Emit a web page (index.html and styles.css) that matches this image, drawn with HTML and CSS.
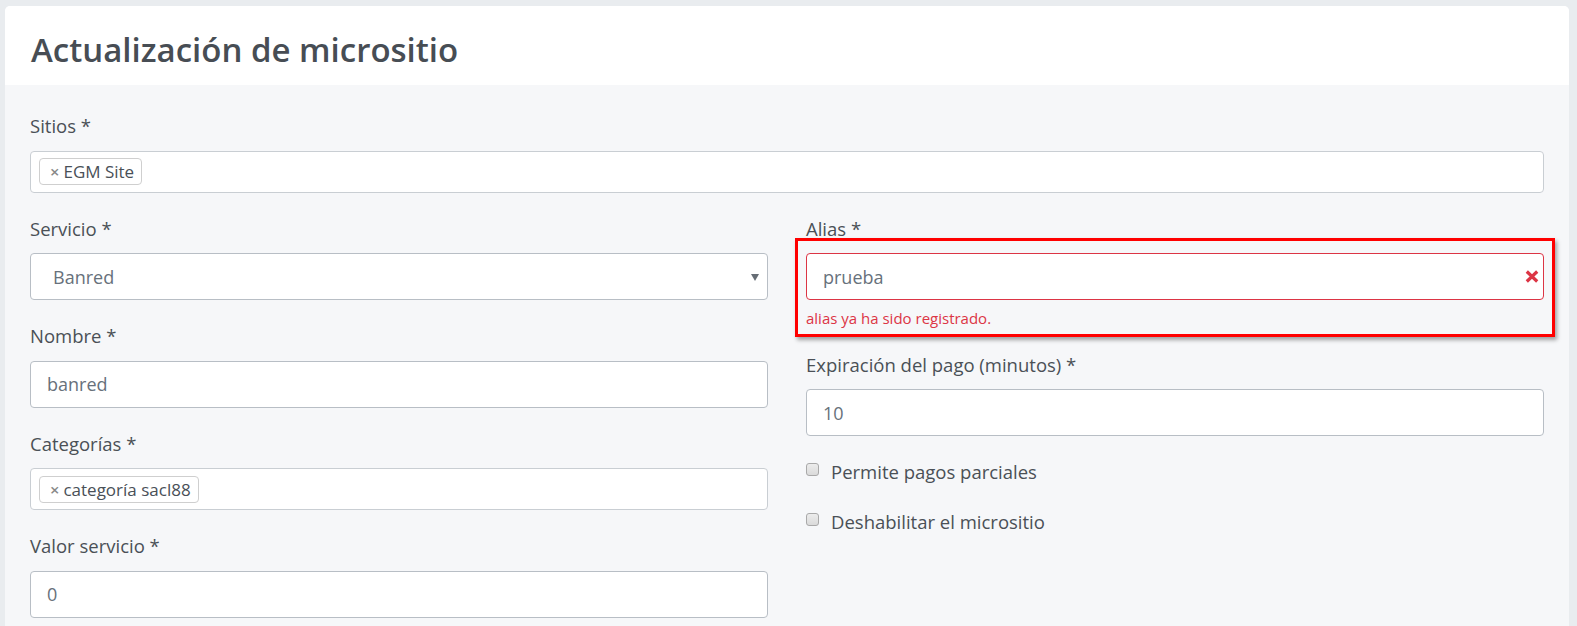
FILE: index.html
```html
<!DOCTYPE html>
<html lang="es">
<head>
<meta charset="utf-8">
<title>Actualización de micrositio</title>
<link rel="stylesheet" href="styles.css">
</head>
<body>
<div class="card">
  <div class="card-header">
    <h1 class="title">Actualización de micrositio</h1>
  </div>
  <div class="card-body">
    <div class="group">
      <label class="label">Sitios *</label>
      <div class="multi">
        <span class="tag"><span class="tag-x">×</span>EGM Site</span>
      </div>
    </div>
    <div class="cols">
      <div class="col">
        <div class="group">
          <label class="label">Servicio *</label>
          <div class="input select">Banred<span class="caret"></span></div>
        </div>
        <div class="group">
          <label class="label">Nombre *</label>
          <div class="input">banred</div>
        </div>
        <div class="group">
          <label class="label">Categorías *</label>
          <div class="multi">
            <span class="tag"><span class="tag-x">×</span>categoría sacl88</span>
          </div>
        </div>
        <div class="group">
          <label class="label">Valor servicio *</label>
          <div class="input">0</div>
        </div>
      </div>
      <div class="col">
        <div class="group alias-group">
          <label class="label">Alias *</label>
          <div class="input invalid">prueba
            <svg class="x-icon" width="14" height="13" viewBox="0 0 14 13"><path d="M1.8 1.5 L12.2 11.5 M12.2 1.5 L1.8 11.5" stroke="#dc3545" stroke-width="3.2"/></svg>
          </div>
          <div class="error">alias ya ha sido registrado.</div>
          <div class="highlight"></div>
        </div>
        <div class="group">
          <label class="label">Expiración del pago (minutos) *</label>
          <div class="input">10</div>
        </div>
        <div class="check-row"><span class="checkbox"></span>Permite pagos parciales</div>
        <div class="check-row"><span class="checkbox"></span>Deshabilitar el micrositio</div>
      </div>
    </div>
  </div>
</div>
</body>
</html>
```
FILE: styles.css
```css
html, body {
  margin: 0;
  padding: 0;
}
body {
  background: #e9ecef;
  font-family: "Open Sans", "Noto Sans", "Liberation Sans", sans-serif;
  color: #495057;
  height: 626px;
  overflow: hidden;
}
.card {
  margin: 6px 8px 0 5px;
  background: #f6f7f9;
  border-radius: 5px;
  overflow: hidden;
  height: 640px;
}
.card-header {
  box-sizing: border-box;
  background: #fff;
  height: 79px;
  padding: 24px 0 0 26px;
}
.title {
  margin: 0;
  font-size: 33px;
  line-height: 40px;
  font-weight: 600;
  color: #474d54;
}
.card-body {
  padding: 28px 25px 0 25px;
}
.group {
  margin-bottom: 23px;
}
.label {
  display: block;
  font-size: 18.5px;
  line-height: 26px;
  height: 26px;
  margin-bottom: 11.5px;
  color: #4a5056;
}
.input {
  box-sizing: border-box;
  height: 47px;
  background: #fff;
  border: 1px solid #b8bec5;
  border-radius: 4px;
  padding: 0 16px;
  display: flex;
  align-items: center;
  font-size: 18px;
  color: #67717b;
  position: relative;
}
.select {
  padding-left: 22px;
}
.caret {
  position: absolute;
  right: 8px;
  top: 20px;
  width: 0;
  height: 0;
  border-left: 4px solid transparent;
  border-right: 4px solid transparent;
  border-top: 7px solid #666d75;
}
.multi {
  box-sizing: border-box;
  height: 42px;
  background: #fff;
  border: 1px solid #c9ced3;
  border-radius: 4px;
  padding: 0 8px;
  display: flex;
  align-items: center;
}
.tag {
  display: inline-flex;
  align-items: center;
  height: 27px;
  box-sizing: border-box;
  border: 1px solid #cfcfcf;
  border-radius: 4px;
  background: #fff;
  padding: 0 7px 0 10px;
  font-size: 17px;
  color: #495057;
}
.tag-x {
  color: #888;
  font-size: 16.5px;
  margin-right: 4px;
  font-weight: 600;
}
.cols {
  display: grid;
  grid-template-columns: 1fr 1fr;
  column-gap: 38px;
}
.alias-group {
  position: relative;
  margin-bottom: 23.5px;
}
.invalid {
  border-color: #dc3545;
}
.x-icon {
  position: absolute;
  right: 4px;
  top: 16px;
}
.error {
  font-size: 15px;
  color: #dc3545;
  line-height: 20px;
  margin-top: 8px;
}
.highlight {
  position: absolute;
  left: -11px;
  top: 22.5px;
  width: 760px;
  height: 98.5px;
  box-sizing: border-box;
  border: 3px solid #ff0000;
  box-shadow: 2px 3px 4px rgba(0, 0, 0, 0.35);
  pointer-events: none;
}
.check-row {
  display: flex;
  align-items: flex-start;
  height: 26px;
  line-height: 26px;
  font-size: 18.5px;
  color: #4a5056;
  margin-top: 0;
  margin-bottom: 24px;
}
.check-row:first-of-type {
  margin-top: 1px;
}
.checkbox {
  flex: none;
  width: 13px;
  height: 13px;
  box-sizing: border-box;
  border: 1px solid #a9a9a9;
  border-radius: 3px;
  background: linear-gradient(#ececec, #dadada);
  margin-top: 4px;
  margin-right: 12px;
}
```
